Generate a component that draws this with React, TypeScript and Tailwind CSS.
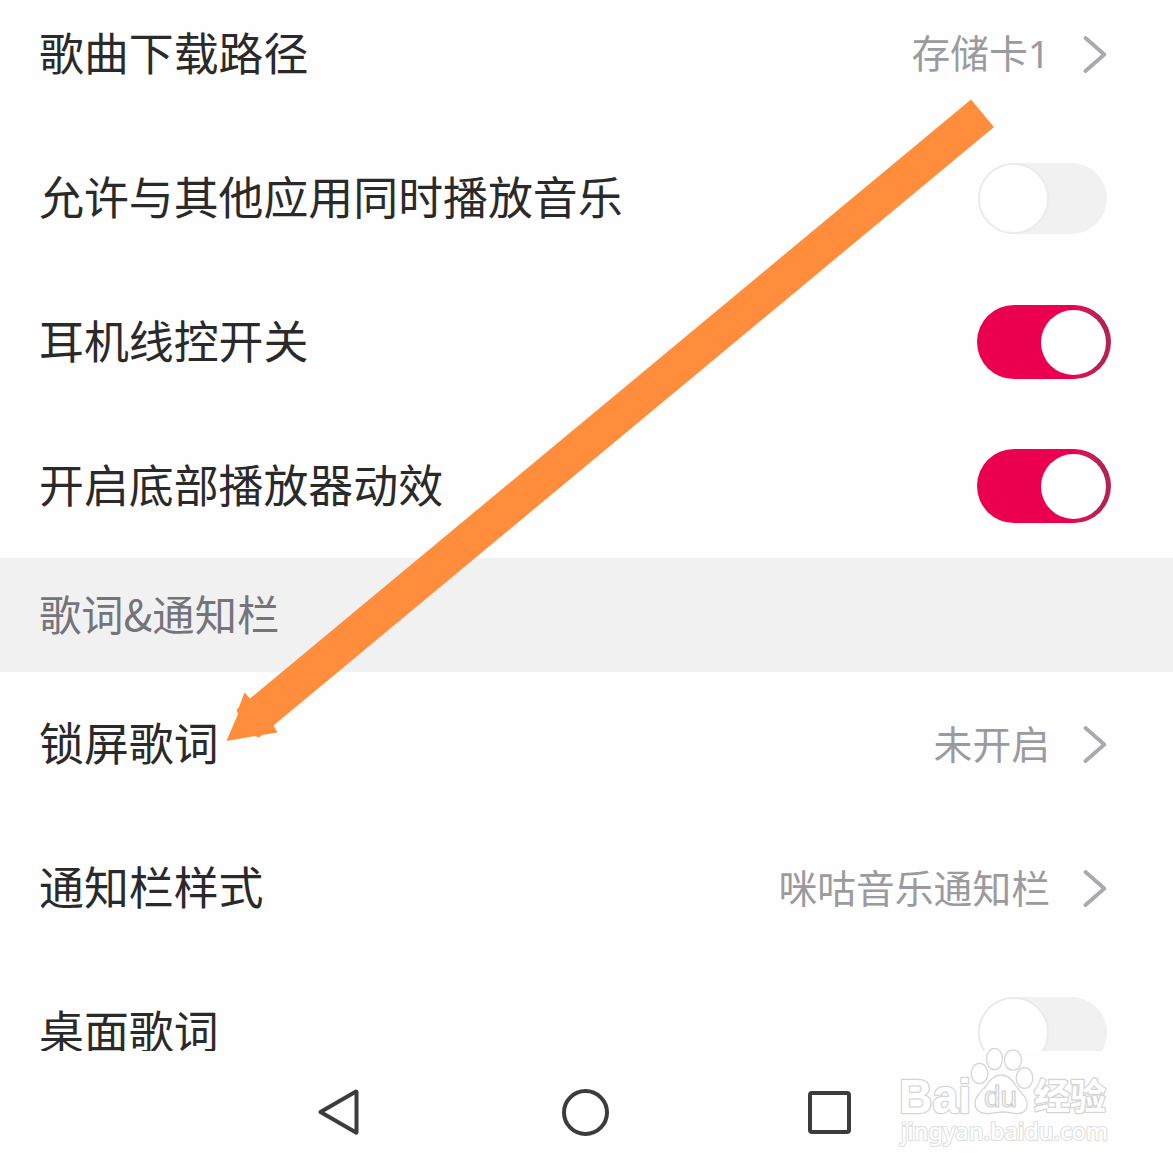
import type { ReactNode } from "react";

function Row({ label, children }: { label: string; children: ReactNode }) {
  return (
    <div className="flex h-36 shrink-0 items-center justify-between pl-[39px] pr-[62px]">
      <span className="pb-[5px] text-[44.9px] leading-[45px] text-[#2a2a2a]">{label}</span>
      {children}
    </div>
  );
}

function LinkValue({ children }: { children: ReactNode }) {
  return (
    <div className="flex items-center gap-[33px] pr-1">
      <span className="pb-1 text-[38.8px] leading-none text-[#9b9b9f]">{children}</span>
      <svg width="24" height="40" viewBox="0 -1 24 40" fill="none" stroke="#a9a9ae" strokeWidth="3.8" strokeLinecap="round" strokeLinejoin="round">
        <path d="M2.500 3 L21.3 19.5 L2.500 36" />
      </svg>
    </div>
  );
}

function Toggle({ on = false }: { on?: boolean }) {
  if (on) {
    return (
      <div className="flex h-[74px] w-[134px] items-center justify-end rounded-full bg-linear-to-r from-[#ea004f] from-70% to-[#b81f55] to-90% pr-[5px]">
        <div className="size-[65px] rounded-full bg-white" />
      </div>
    );
  }
  return (
    <div className="mr-[4px] flex h-[71px] w-[129px] items-center rounded-full bg-[#f1f1f1]">
      <div className="size-[71px] shrink-0 rounded-full border-2 border-[#ebebeb] bg-white" />
    </div>
  );
}

function Arrow() {
  return (
    <svg className="absolute left-[220px] top-[90px]" width="785" height="660" viewBox="220 90 785 660" fill="#ff8d3b">
      <path d="M971 99.5 L994 127 L273.5 725.5 L277.5 732.5 L262 735 L259 737.5 L255 736 L226.5 741 L238 714 L236.500 710 L239 707 L244.5 692.5 L250 698.5 Z" />
    </svg>
  );
}

function Watermark() {
  return (
    <svg className="absolute left-[895px] top-[1042px]" width="222" height="110" viewBox="895 1042 222 110" fill="#fff" stroke="#d5d5d5" strokeWidth="1.3">
      <text x="899" y="1112.5" fontSize="47.5" fontFamily="Liberation Sans" fontWeight="700" textLength="72" lengthAdjust="spacingAndGlyphs" paintOrder="stroke" strokeLinejoin="round" strokeWidth="2.6">Bai</text>
      <ellipse cx="979.5" cy="1073.5" rx="8.3" ry="10.2" />
      <ellipse cx="994.5" cy="1059" rx="8" ry="10.7" />
      <ellipse cx="1013" cy="1060" rx="8.5" ry="10.2" />
      <ellipse cx="1024.5" cy="1078" rx="8.3" ry="10.4" />
      <path d="M1001 1075 C994 1075 990 1080 986 1086 C981 1092 975 1096 975 1103 C975 1110 980 1114 988 1113.500 C994 1113 998 1112 1004 1112 C1010 1112 1014 1114 1019 1113.500 C1025 1113 1028 1108 1027 1102 C1026 1096 1020 1092 1016 1086 C1012 1079 1008 1075 1001 1075 Z" />
      <text x="984" y="1107" fontSize="29" fontFamily="Liberation Sans" textLength="33" lengthAdjust="spacingAndGlyphs" strokeWidth="1.2" stroke="#cfcfcf">du</text>
      <text x="1034" y="1109.5" fontSize="36" fontFamily="Noto Sans CJK SC" fontWeight="700" textLength="72" paintOrder="stroke" strokeLinejoin="round" strokeWidth="2.6">经验</text>
      <text x="901" y="1140" fontSize="24" fontFamily="Noto Sans" fontWeight="500" textLength="207" lengthAdjust="spacingAndGlyphs" paintOrder="stroke" strokeLinejoin="round" strokeWidth="2.2" stroke="#dedede">jingyan.baidu.com</text>
    </svg>
  );
}

export default function App() {
  return (
    <div className="relative flex h-[1173px] w-[1173px] flex-col overflow-hidden bg-[#fefefe] font-['Noto_Sans_CJK_SC',sans-serif]">
      <main className="flex h-[1051px] shrink-0 flex-col overflow-hidden">
        <div className="-mt-[18px] flex shrink-0 flex-col">
          <Row label="歌曲下载路径">
            <LinkValue>存储卡<span className="font-['Noto_Sans']">1</span></LinkValue>
          </Row>
          <Row label="允许与其他应用同时播放音乐"><Toggle /></Row>
          <Row label="耳机线控开关"><Toggle on /></Row>
          <Row label="开启底部播放器动效"><Toggle on /></Row>
        </div>
        <h2 className="flex h-[114px] shrink-0 items-center bg-[#f1f1f1] pb-1 pl-[39px] text-[42.3px] leading-none text-[#75747b]">
          歌词&amp;通知栏
        </h2>
        <Row label="锁屏歌词"><LinkValue>未开启</LinkValue></Row>
        <Row label="通知栏样式"><LinkValue>咪咕音乐通知栏</LinkValue></Row>
        <Row label="桌面歌词"><Toggle /></Row>
      </main>
      <nav className="flex h-[122px] shrink-0 items-center pl-[317px]">
        <svg width="44" height="50" viewBox="0 0 44 50" fill="none" stroke="#3c3c3c" strokeWidth="4" strokeLinejoin="round">
          <path d="M39 4.500 L3.500 25 L39 45.500 Q39.500 46 39.500 45 L39.500 5 Z" />
        </svg>
        <div className="ml-[200.5px] size-[47px] rounded-full border-4 border-[#3c3c3c]" />
        <div className="ml-[199px] size-[43px] rounded-[4px] border-4 border-[#3c3c3c]" />
      </nav>
      <Arrow />
      <Watermark />
    </div>
  );
}
